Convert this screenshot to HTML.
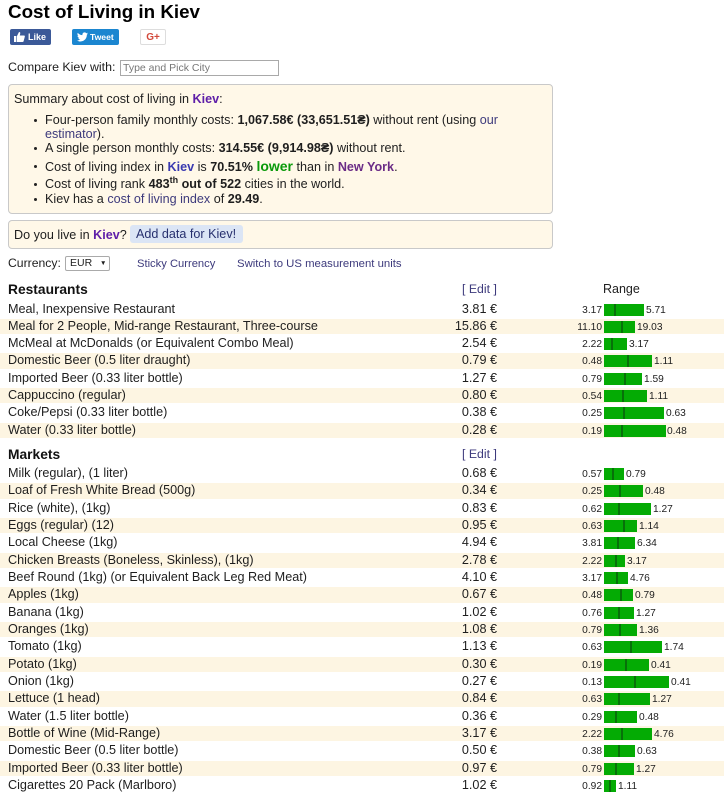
<!DOCTYPE html>
<html><head><meta charset="utf-8">
<style>
*{box-sizing:border-box}
html,body{margin:0;padding:0;background:#fff}
body{width:724px;height:800px;overflow:hidden;position:relative;font-family:"Liberation Sans",Arial,sans-serif;font-size:12.6px;color:#1e1e1e}
.a{position:absolute;white-space:nowrap}
a{color:#3d3a7c;text-decoration:none}
.k{color:#5e1ea8;font-weight:bold}
h1{position:absolute;left:8px;top:0;margin:0;font-size:18.8px;line-height:22px;color:#000}
.btn{position:absolute;top:29px;height:16px;border-radius:2px;color:#fff;font-size:9px;font-weight:bold;line-height:16px}
.box{position:absolute;left:8px;width:545px;background:#fff8e8;border:1px solid #c9c9c9;border-radius:4px}
ul{margin:0;padding:0;position:absolute;left:0;top:0;list-style:none}
li{position:absolute;left:45px;white-space:nowrap;line-height:14px}
li:before{content:"";position:absolute;left:-11px;top:6px;width:3px;height:3px;border-radius:50%;background:#222}
.t{position:absolute;left:0;width:724px;font-size:12.64px}
.r{position:relative;height:15.33px;margin-bottom:2px;line-height:15px}
.r:nth-child(even){background:#fdf5e2}
.r b,.r i,.r u,.r s,.r em{position:absolute;font-style:normal;font-weight:normal;text-decoration:none}
.n{left:8px;white-space:nowrap}
.p{right:227px;top:0}
.lo{right:122px;top:1px;font-size:10.2px}
.bar{position:absolute;left:604px;top:2px;height:12px;background:#04ab04}
.bar span{position:absolute;top:0;width:2px;height:12px;background:#08700a}
.hi{top:1px;font-size:10.2px}
.h{font-size:13.8px;font-weight:bold;color:#111;line-height:15px}
</style></head><body>
<h1 style="top:1px">Cost of Living in Kiev</h1>

<div class="btn" style="left:10px;width:41px;background:#3b5998">
<svg class="a" style="left:4px;top:3px" width="11" height="10" viewBox="0 0 11 10"><path d="M0 4h2.400v6H0zM3 4l2-4c1 0 1.500.6 1.200 1.600L5.800 3.500H10c.8 0 1 .7.800 1.300L9.600 9.300c-.2.500-.5.700-1 .7H3z" fill="#fff"/></svg>
<span class="a" style="left:18px">Like</span></div>
<div class="btn" style="left:72px;width:47px;background:#1b86d0">
<svg class="a" style="left:5px;top:3px" width="11" height="10" viewBox="0 0 24 20"><path d="M24 2.400c-.9.400-1.800.7-2.800.8 1-.6 1.800-1.600 2.200-2.700-1 .6-2 1-3.100 1.200C19.300.7 18 0 16.600 0c-2.700 0-4.900 2.200-4.900 4.900 0 .4 0 .8.100 1.100C7.700 5.800 4.100 3.900 1.700.9 1.200 1.600 1 2.500 1 3.400c0 1.700.9 3.200 2.200 4.100-.8 0-1.600-.2-2.200-.6v.1c0 2.400 1.700 4.400 3.900 4.800-.7.200-1.500.2-2.200.1.600 2 2.400 3.400 4.600 3.400C5 16.900 2.500 17.800 0 17.500 2.200 18.900 4.800 19.700 7.500 19.700c9.100 0 14-7.500 14-14v-.6c1-.7 1.800-1.600 2.500-2.700z" fill="#fff"/></svg>
<span class="a" style="left:18px;font-size:8.6px">Tweet</span></div>
<div class="btn" style="left:140px;width:26px;background:#fff;border:1px solid #ddd;color:#d2483a;line-height:15px;font-size:10px;text-align:center">G+</div>

<div class="a" style="left:8px;top:60px;font-size:12.4px;line-height:15px">Compare Kiev with:</div>
<div class="a" style="left:120px;top:60px;width:159px;height:16px;border:1px solid #a9a9a9;font-size:10.5px;line-height:14px;padding-left:2px;color:#777">Type and Pick City</div>

<div class="box" style="top:84px;height:130px"></div>
<div class="a" style="left:14px;top:92px;line-height:14px">Summary about cost of living in <span class="k">Kiev</span>:</div>
<ul>
<li style="top:113px">Four-person family monthly costs: <b>1,067.58€ (33,651.51₴)</b> without rent (using <a href="#">our</a></li>
<li class="nb" style="top:127px"><a href="#">estimator</a>).</li>
<li style="top:141px">A single person monthly costs: <b>314.55€ (9,914.98₴)</b> without rent.</li>
<li style="top:159px">Cost of living index in <span class="k" style="color:#3a3ab0">Kiev</span> is <b>70.51%</b> <b style="color:#0a9a0a;font-size:14px">lower</b> than in <b style="color:#6b2c86">New York</b>.</li>
<li style="top:177px">Cost of living rank <b>483<sup style="font-size:9px;line-height:0">th</sup> out of 522</b> cities in the world.</li>
<li style="top:192px">Kiev has a <a href="#">cost of living index</a> of <b>29.49</b>.</li>
</ul>
<style>li.nb:before{display:none}</style>

<div class="box" style="top:220px;height:29px"></div>
<div class="a" style="left:14px;top:228px;line-height:14px">Do you live in <span class="k">Kiev</span>?</div>
<div class="a" style="left:130px;top:225px;width:113px;height:18px;background:#dbe5f5;border-radius:3px;color:#27306e;line-height:18px;padding-left:6px">Add data for Kiev!</div>

<div class="a" style="left:8px;top:256px;line-height:14px;font-size:12.2px">Currency:</div>
<div class="a" style="left:65px;top:256px;width:45px;height:15px;border:1px solid #aaa;border-radius:2px;font-size:10.5px;line-height:13px;padding-left:4px">EUR<span class="a" style="left:34px;top:0;font-size:6.5px">▼</span></div>
<div class="a" style="left:137px;top:257px;font-size:11.2px;line-height:14px"><a href="#">Sticky Currency</a></div>
<div class="a" style="left:237px;top:257px;font-size:11.35px;line-height:14px"><a href="#">Switch to US measurement units</a></div>

<div class="a h" style="left:8px;top:282px">Restaurants</div>
<div class="a" style="left:462px;top:282px;line-height:15px;font-size:12.3px"><a href="#">[ Edit ]</a></div>
<div class="a" style="left:603px;top:282px;line-height:15px;font-size:12.5px">Range</div>

<div class="t" style="top:301.5px">
<div class="r"><b class="n">Meal, Inexpensive Restaurant</b><i class="p">3.81 €</i><u class="lo">3.17</u><div class="bar" style="width:40px"><span style="left:10px"></span></div><s class="hi" style="left:646px">5.71</s></div>
<div class="r"><b class="n">Meal for 2 People, Mid-range Restaurant, Three-course</b><i class="p">15.86 €</i><u class="lo">11.10</u><div class="bar" style="width:31px"><span style="left:17px"></span></div><s class="hi" style="left:637px">19.03</s></div>
<div class="r"><b class="n">McMeal at McDonalds (or Equivalent Combo Meal)</b><i class="p">2.54 €</i><u class="lo">2.22</u><div class="bar" style="width:23px"><span style="left:7px"></span></div><s class="hi" style="left:629px">3.17</s></div>
<div class="r"><b class="n">Domestic Beer (0.5 liter draught)</b><i class="p">0.79 €</i><u class="lo">0.48</u><div class="bar" style="width:48px"><span style="left:23px"></span></div><s class="hi" style="left:654px">1.11</s></div>
<div class="r"><b class="n">Imported Beer (0.33 liter bottle)</b><i class="p">1.27 €</i><u class="lo">0.79</u><div class="bar" style="width:38px"><span style="left:20px"></span></div><s class="hi" style="left:644px">1.59</s></div>
<div class="r"><b class="n">Cappuccino (regular)</b><i class="p">0.80 €</i><u class="lo">0.54</u><div class="bar" style="width:43px"><span style="left:18px"></span></div><s class="hi" style="left:649px">1.11</s></div>
<div class="r"><b class="n">Coke/Pepsi (0.33 liter bottle)</b><i class="p">0.38 €</i><u class="lo">0.25</u><div class="bar" style="width:60px"><span style="left:19px"></span></div><s class="hi" style="left:666px">0.63</s></div>
<div class="r"><b class="n">Water (0.33 liter bottle)</b><i class="p">0.28 €</i><u class="lo">0.19</u><div class="bar" style="width:62px"><span style="left:17px"></span></div><s class="hi" style="left:667px">0.48</s></div>
</div>

<div class="a h" style="left:8px;top:447px">Markets</div>
<div class="a" style="left:462px;top:447px;line-height:15px;font-size:12.3px"><a href="#">[ Edit ]</a></div>

<div class="t" style="top:466px">
<div class="r"><b class="n">Milk (regular), (1 liter)</b><i class="p">0.68 €</i><u class="lo">0.57</u><div class="bar" style="width:20px"><span style="left:8px"></span></div><s class="hi" style="left:626px">0.79</s></div>
<div class="r"><b class="n">Loaf of Fresh White Bread (500g)</b><i class="p">0.34 €</i><u class="lo">0.25</u><div class="bar" style="width:39px"><span style="left:15px"></span></div><s class="hi" style="left:645px">0.48</s></div>
<div class="r"><b class="n">Rice (white), (1kg)</b><i class="p">0.83 €</i><u class="lo">0.62</u><div class="bar" style="width:47px"><span style="left:14px"></span></div><s class="hi" style="left:653px">1.27</s></div>
<div class="r"><b class="n">Eggs (regular) (12)</b><i class="p">0.95 €</i><u class="lo">0.63</u><div class="bar" style="width:33px"><span style="left:19px"></span></div><s class="hi" style="left:639px">1.14</s></div>
<div class="r"><b class="n">Local Cheese (1kg)</b><i class="p">4.94 €</i><u class="lo">3.81</u><div class="bar" style="width:31px"><span style="left:13px"></span></div><s class="hi" style="left:637px">6.34</s></div>
<div class="r"><b class="n">Chicken Breasts (Boneless, Skinless), (1kg)</b><i class="p">2.78 €</i><u class="lo">2.22</u><div class="bar" style="width:21px"><span style="left:11px"></span></div><s class="hi" style="left:627px">3.17</s></div>
<div class="r"><b class="n">Beef Round (1kg) (or Equivalent Back Leg Red Meat)</b><i class="p">4.10 €</i><u class="lo">3.17</u><div class="bar" style="width:24px"><span style="left:12px"></span></div><s class="hi" style="left:630px">4.76</s></div>
<div class="r"><b class="n">Apples (1kg)</b><i class="p">0.67 €</i><u class="lo">0.48</u><div class="bar" style="width:29px"><span style="left:16px"></span></div><s class="hi" style="left:635px">0.79</s></div>
<div class="r"><b class="n">Banana (1kg)</b><i class="p">1.02 €</i><u class="lo">0.76</u><div class="bar" style="width:30px"><span style="left:14px"></span></div><s class="hi" style="left:636px">1.27</s></div>
<div class="r"><b class="n">Oranges (1kg)</b><i class="p">1.08 €</i><u class="lo">0.79</u><div class="bar" style="width:33px"><span style="left:15px"></span></div><s class="hi" style="left:639px">1.36</s></div>
<div class="r"><b class="n">Tomato (1kg)</b><i class="p">1.13 €</i><u class="lo">0.63</u><div class="bar" style="width:58px"><span style="left:26px"></span></div><s class="hi" style="left:664px">1.74</s></div>
<div class="r"><b class="n">Potato (1kg)</b><i class="p">0.30 €</i><u class="lo">0.19</u><div class="bar" style="width:45px"><span style="left:21px"></span></div><s class="hi" style="left:651px">0.41</s></div>
<div class="r"><b class="n">Onion (1kg)</b><i class="p">0.27 €</i><u class="lo">0.13</u><div class="bar" style="width:65px"><span style="left:30px"></span></div><s class="hi" style="left:671px">0.41</s></div>
<div class="r"><b class="n">Lettuce (1 head)</b><i class="p">0.84 €</i><u class="lo">0.63</u><div class="bar" style="width:46px"><span style="left:14px"></span></div><s class="hi" style="left:652px">1.27</s></div>
<div class="r"><b class="n">Water (1.5 liter bottle)</b><i class="p">0.36 €</i><u class="lo">0.29</u><div class="bar" style="width:33px"><span style="left:11px"></span></div><s class="hi" style="left:639px">0.48</s></div>
<div class="r"><b class="n">Bottle of Wine (Mid-Range)</b><i class="p">3.17 €</i><u class="lo">2.22</u><div class="bar" style="width:48px"><span style="left:17px"></span></div><s class="hi" style="left:654px">4.76</s></div>
<div class="r"><b class="n">Domestic Beer (0.5 liter bottle)</b><i class="p">0.50 €</i><u class="lo">0.38</u><div class="bar" style="width:31px"><span style="left:14px"></span></div><s class="hi" style="left:637px">0.63</s></div>
<div class="r"><b class="n">Imported Beer (0.33 liter bottle)</b><i class="p">0.97 €</i><u class="lo">0.79</u><div class="bar" style="width:30px"><span style="left:11px"></span></div><s class="hi" style="left:636px">1.27</s></div>
<div class="r"><b class="n">Cigarettes 20 Pack (Marlboro)</b><i class="p">1.02 €</i><u class="lo">0.92</u><div class="bar" style="width:12px"><span style="left:5px"></span></div><s class="hi" style="left:618px">1.11</s></div>
</div>
</body></html>
